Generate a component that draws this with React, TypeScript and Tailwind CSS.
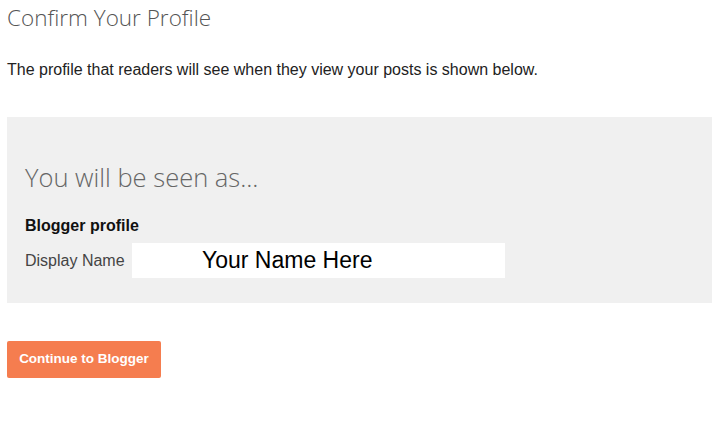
export default function App() {
  return (
    <main className="w-[712px] h-[438px] bg-white overflow-hidden font-['Liberation_Sans',Arial,sans-serif]">
      <h1 className="pl-[7px] pt-[4px] text-[22.5px] leading-[28px] font-light text-[#555] font-['Open_Sans',sans-serif]">
        Confirm Your Profile
      </h1>

      <p className="pl-[7px] mt-[28px] text-[16px] leading-[20px] text-[#222]">
        The profile that readers will see when they view your posts is shown below.
      </p>

      <section className="ml-[7px] mt-[37px] h-[186px] bg-[#f0f0f0] pl-[18px] pt-[43px]">
        <h2 className="text-[25.5px] leading-[34px] font-light text-[#666] font-['Open_Sans',sans-serif]">
          You will be seen as...
        </h2>
        <div className="mt-[22px] text-[16px] leading-[20px] font-bold text-[#111]">Blogger profile</div>
        <div className="mt-[7px] flex items-center">
          <span className="w-[107px] text-[16px] text-[#444]">Display Name</span>
          <div className="w-[373px] h-[35px] bg-white pl-[70px] flex items-center text-[23px] text-black">
            Your Name Here
          </div>
        </div>
      </section>

      <button className="ml-[7px] mt-[38px] w-[154px] h-[37px] rounded-[2px] bg-[#f57d4f] text-white text-[13.5px] font-bold">
        Continue to Blogger
      </button>
    </main>
  );
}
